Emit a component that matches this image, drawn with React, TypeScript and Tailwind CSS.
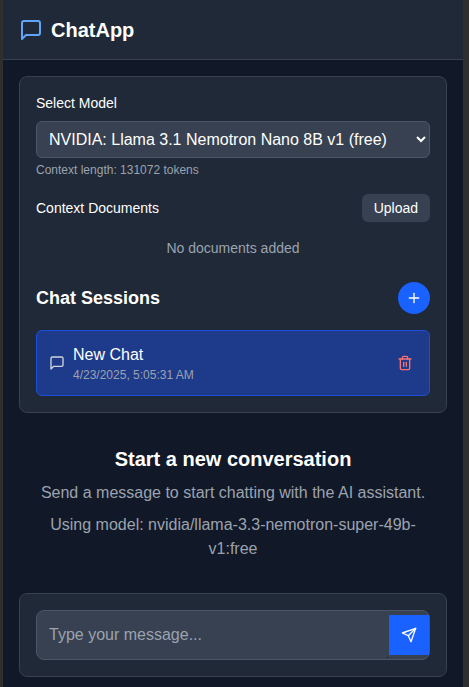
export default function App() {
  return (
    <div className="flex h-[687px] w-[469px] overflow-hidden bg-[#2f2f2f] font-['Liberation_Sans',Arial,sans-serif] text-white">
      <div className="ml-[3px] flex w-[460px] flex-col bg-[#111827]">
        <header className="flex h-[60px] items-center gap-2 border-b border-[#374151] bg-[#1f2937] px-4">
          <svg width="24" height="24" viewBox="0 0 24 24" fill="none" stroke="#60a5fa" strokeWidth="2" strokeLinecap="round" strokeLinejoin="round">
            <path d="M21 15a2 2 0 0 1-2 2H7l-4 4V5a2 2 0 0 1 2-2h14a2 2 0 0 1 2 2z" />
          </svg>
          <h1 className="text-xl font-bold">ChatApp</h1>
        </header>
        <main className="flex flex-1 flex-col px-4 pt-4">
          <section className="h-[337px] rounded-lg border border-[#374151] bg-[#1f2937] p-4">
            <label className="block text-sm leading-5 font-medium">Select Model</label>
            <select className="mt-2 h-[37px] w-full rounded-md border border-[#4b5563] bg-[#374151] px-2 text-base text-white">
              <option>NVIDIA: Llama 3.1 Nemotron Nano 8B v1 (free)</option>
            </select>
            <p className="mt-1 text-xs leading-4 text-[#9ca3af]">Context length: 131072 tokens</p>
            <div className="mt-4 flex items-center justify-between">
              <span className="text-sm font-medium">Context Documents</span>
              <button className="h-7 rounded-md bg-[#374151] px-3 text-sm">Upload</button>
            </div>
            <p className="mt-4 text-center text-sm leading-5 text-[#9ca3af]">No documents added</p>
            <div className="mt-6 flex items-center justify-between">
              <h2 className="text-lg font-bold">Chat Sessions</h2>
              <button className="flex h-8 w-8 items-center justify-center rounded-full bg-[#1a62ff]">
                <svg width="16" height="16" viewBox="0 0 24 24" fill="none" stroke="currentColor" strokeWidth="2" strokeLinecap="round" strokeLinejoin="round">
                  <path d="M5 12h14" />
                  <path d="M12 5v14" />
                </svg>
              </button>
            </div>
            <div className="mt-4 flex h-[66px] items-center justify-between rounded-md border border-[#1d4ed8] bg-[#1e3a8a] px-3">
              <div className="flex items-center gap-2">
                <svg width="16" height="16" viewBox="0 0 24 24" fill="none" stroke="#d1d5db" strokeWidth="2" strokeLinecap="round" strokeLinejoin="round">
                  <path d="M21 15a2 2 0 0 1-2 2H7l-4 4V5a2 2 0 0 1 2-2h14a2 2 0 0 1 2 2z" />
                </svg>
                <div>
                  <div className="text-base leading-6">New Chat</div>
                  <div className="text-xs leading-4 text-[#9ca3af]">4/23/2025, 5:05:31 AM</div>
                </div>
              </div>
              <button className="p-1">
                <svg width="16" height="16" viewBox="0 0 24 24" fill="none" stroke="#f87171" strokeWidth="2" strokeLinecap="round" strokeLinejoin="round">
                  <path d="M3 6h18" />
                  <path d="M19 6v14c0 1-1 2-2 2H7c-1 0-2-1-2-2V6" />
                  <path d="M8 6V4c0-1 1-2 2-2h4c1 0 2 1 2 2v2" />
                  <line x1="10" x2="10" y1="11" y2="17" />
                  <line x1="14" x2="14" y1="11" y2="17" />
                </svg>
              </button>
            </div>
          </section>
          <section className="flex flex-1 flex-col items-center justify-center px-4 text-center">
            <h3 className="mb-2 text-xl font-bold">Start a new conversation</h3>
            <p className="text-base text-[#9ca3af]">Send a message to start chatting with the AI assistant.</p>
            <p className="mt-2 text-base text-[#9ca3af]">Using model: nvidia/llama-3.3-nemotron-super-49b-v1:free</p>
          </section>
          <section className="mb-[10px] rounded-lg border border-[#374151] bg-[#1f2937] p-4">
            <div className="relative flex items-center rounded-lg border border-[#4b5563] bg-[#374151]">
              <textarea placeholder="Type your message..." rows={1} className="h-12 flex-1 resize-none bg-transparent px-3 py-3 text-base leading-6 placeholder:text-[#9ca3af] focus:outline-none" />
              <button className="flex h-10 w-10 items-center justify-center bg-[#1a62ff]">
                <svg width="16" height="16" viewBox="0 0 24 24" fill="none" stroke="currentColor" strokeWidth="2" strokeLinecap="round" strokeLinejoin="round">
                  <path d="m22 2-7 20-4-9-9-4Z" />
                  <path d="M22 2 11 13" />
                </svg>
              </button>
              <span className="absolute right-[41px] bottom-[1px] h-px w-px bg-[#111827]" />
            </div>
          </section>
        </main>
      </div>
    </div>
  );
}
